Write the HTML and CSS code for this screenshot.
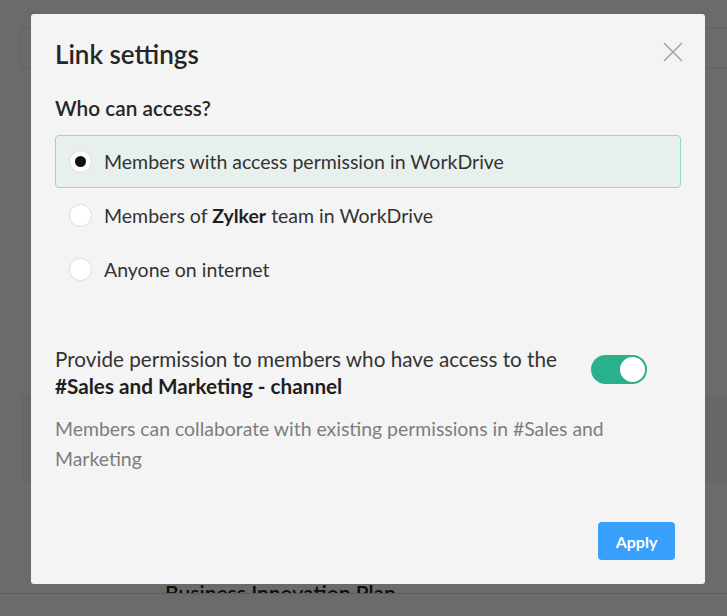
FILE: index.html
```html
<!DOCTYPE html>
<html lang="en">
<head>
  <meta charset="UTF-8">
  <meta name="viewport" content="width=device-width, initial-scale=1.0">
  <title>Link settings</title>
  <link rel="stylesheet" href="styles.css">
</head>
<body>
  <div class="page">
    <div class="topbar"></div>
    <div class="banner"></div>
    <div class="file-row">Business Innovation Plan</div>
    <div class="page-footer"></div>
  </div>

  <div class="overlay">
    <div class="modal">
      <button type="button" class="close" aria-label="Close">
        <svg width="20" height="20" viewBox="0 0 20 20"><path d="M1 1 L19 19 M19 1 L1 19" stroke="#a4a4a4" stroke-width="1.6" fill="none"/></svg>
      </button>
      <h2>Link settings</h2>
      <h3>Who can access?</h3>

      <div class="options">
        <label class="option selected">
          <span class="radio checked"></span>
          Members with access permission in WorkDrive
        </label>
        <label class="option">
          <span class="radio"></span>
          <span>Members of <b>Zylker</b> team in WorkDrive</span>
        </label>
        <label class="option">
          <span class="radio"></span>
          Anyone on internet
        </label>
      </div>

      <div class="channel">
        <div class="channel-text">
          Provide permission to members who have access to the
          <b>#Sales and Marketing - channel</b>
        </div>
        <span class="toggle on"><span class="knob"></span></span>
      </div>
      <p class="hint">Members can collaborate with existing permissions in #Sales and Marketing</p>

      <div class="footer">
        <button type="button" class="apply">Apply</button>
      </div>
    </div>
  </div>
</body>
</html>
```

FILE: styles.css
```css
body {
  margin: 0;
  background: #fff;
  font-family: Lato, "Open Sans", sans-serif;
  color: #333;
  overflow: hidden;
}
.page {
  height: 616px;
  padding-top: 27px;
  box-sizing: border-box;
}
.topbar {
  margin-left: 20px;
  height: 39px;
  border: 1px solid #e6e6e6;
  border-right: none;
  border-radius: 4px 0 0 4px;
}
.banner {
  margin: 327px 0 0 22px;
  height: 87px;
  background: #f0f5fa;
}
.file-row {
  margin-top: 99px;
  height: 12px;
  overflow: hidden;
  padding-left: 165px;
  font-size: 21px;
  line-height: 24px;
  font-weight: 600;
  color: #222;
}
.page-footer {
  border-top: 1px solid #d9d9d9;
  height: 22px;
}

.overlay {
  position: fixed;
  inset: 0;
  background: rgba(0, 0, 0, 0.58);
}
.modal {
  position: relative;
  margin: 14px 0 0 31px;
  width: 674px;
  height: 570px;
  box-sizing: border-box;
  padding: 25px 24px 24px;
  background: #f4f4f4;
  border-radius: 3px;
  display: flex;
  flex-direction: column;
}
.close {
  position: absolute;
  top: 28px;
  right: 22px;
  width: 20px;
  height: 20px;
  padding: 0;
  border: none;
  background: none;
}
.close svg {
  display: block;
}
h2 {
  margin: 0;
  font-size: 26px;
  line-height: 30px;
  font-weight: 600;
  color: #262626;
}
h3 {
  margin: 26px 0 0;
  font-size: 20.8px;
  line-height: 26px;
  font-weight: 600;
  color: #262626;
}
.options {
  margin-top: 14px;
  display: flex;
  flex-direction: column;
  gap: 1px;
}
.option {
  display: flex;
  align-items: center;
  gap: 12px;
  height: 53px;
  box-sizing: border-box;
  padding-left: 13px;
  border: 1px solid transparent;
  border-radius: 4px;
  font-size: 19.5px;
  color: #333;
}
.option b {
  color: #1f1f1f;
}
.option.selected {
  background: #e8f0ee;
  border-color: #8fdccb;
}
.radio {
  width: 23px;
  height: 23px;
  box-sizing: border-box;
  border: 1px solid #dcdcdc;
  border-radius: 50%;
  background: #fff;
  display: flex;
  align-items: center;
  justify-content: center;
  flex-shrink: 0;
}
.radio.checked::after {
  content: "";
  width: 11px;
  height: 11px;
  border-radius: 50%;
  background: #111;
}
.channel {
  margin-top: 50px;
  display: flex;
  align-items: flex-start;
  gap: 30px;
}
.channel-text {
  width: 506px;
  font-size: 20.7px;
  line-height: 27px;
  color: #333;
}
.channel-text b {
  color: #1f1f1f;
}
.toggle {
  margin-top: 9px;
  width: 56px;
  height: 29px;
  box-sizing: border-box;
  padding: 2px;
  border-radius: 15px;
  background: #2bb08e;
  display: flex;
  justify-content: flex-end;
}
.knob {
  width: 25px;
  height: 25px;
  border-radius: 50%;
  background: #fff;
}
.hint {
  margin: 14px 0 0;
  font-size: 19.4px;
  line-height: 30px;
  color: #7d7d7d;
}
.footer {
  margin-top: auto;
  display: flex;
  justify-content: flex-end;
  padding-right: 6px;
}
.apply {
  width: 77px;
  height: 38px;
  border: none;
  border-radius: 4px;
  background: #389ffb;
  color: #fff;
  font-family: Lato, sans-serif;
  font-size: 16px;
  font-weight: 700;
}
```
